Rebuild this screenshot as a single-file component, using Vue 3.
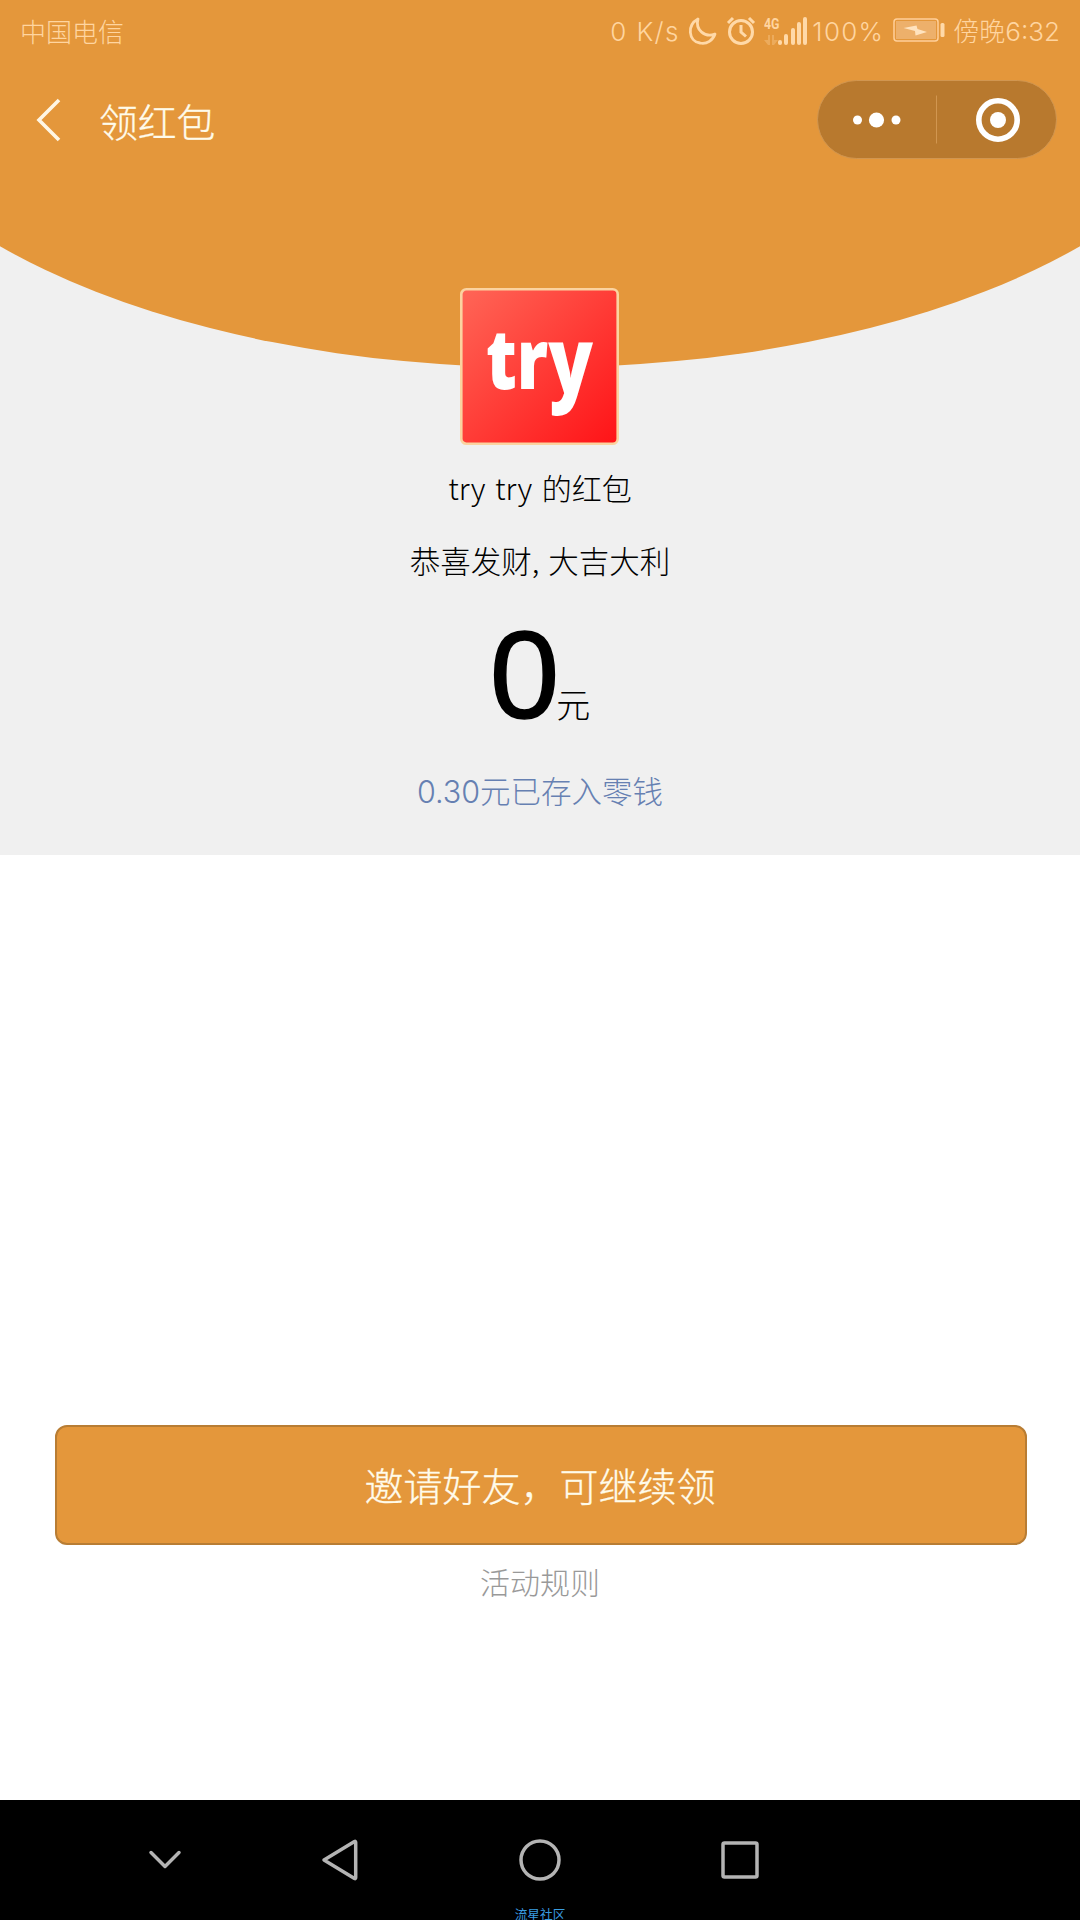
<script setup>
const signalBars = [5, 11, 17, 23, 28]
</script>

<template>
  <div class="phone">
    <section class="hero">
      <svg class="arc" viewBox="0 0 1080 855" aria-hidden="true">
        <ellipse cx="540" cy="34" rx="700" ry="333.500" fill="#e4973b" />
      </svg>

      <header class="status">
        <span class="carrier">中国电信</span>
        <div class="status-right">
          <span class="latin speed">0 K/s</span>
          <svg class="moon" width="30" height="30" viewBox="0 0 30 30" fill="none" stroke="#ffd9a8" stroke-width="2.8" stroke-linejoin="round">
            <path d="M10 3C-1 9 0 25 12 27C19 28.500 25 24 27 18C17 22 7 14 10 3Z" />
          </svg>
          <svg class="alarm" width="30" height="30" viewBox="0 0 30 30" fill="none" stroke="#ffd9a8" stroke-width="3">
            <circle cx="15" cy="16" r="11.500" />
            <path d="M15 9v7l5 4.500M2 7l5-5M28 7l-5-5" />
          </svg>
          <div class="signal">
            <div class="net">
              <b>4G</b>
              <svg width="14" height="10" viewBox="0 0 14 10" fill="#ffd9a8" opacity=".3">
                <path d="M4 0h2v10H4L0 5h4zM8 0h2v5h4l-4 5H8z" />
              </svg>
            </div>
            <i v-for="h in signalBars" :key="h" :style="{ height: h + 'px' }"></i>
          </div>
          <span class="latin percent">100%</span>
          <svg class="battery" width="52" height="26" viewBox="0 0 52 26">
            <rect x="1" y="1" width="44" height="22" rx="3" fill="none" stroke="#ffd09a" stroke-width="1.500" />
            <rect x="3" y="3" width="40" height="18" fill="#edb06b" />
            <path d="M10.500 10L22 13L22.500 17.500L34 14L24.500 11L23.500 7.500Z" fill="#ffe3bf" />
            <rect x="47.500" y="5" width="4" height="14" rx="1.500" fill="#ffd9a8" />
          </svg>
          <span class="time">傍晚<span class="latin">6:32</span></span>
        </div>
      </header>

      <nav class="titlebar">
        <svg class="back" width="26" height="44" viewBox="0 0 26 44" fill="none" stroke="#fff6e4" stroke-width="3.600">
          <path d="M23 2L3 22L23 42" />
        </svg>
        <h1>领红包</h1>
        <div class="capsule">
          <svg width="240" height="79" viewBox="0 0 240 79" fill="#fff">
            <rect x=".5" y=".5" width="239" height="78" rx="39" fill="#b8792e" stroke="#d19650" />
            <circle cx="40.500" cy="40" r="4.500" />
            <circle cx="59.500" cy="40" r="7.600" />
            <circle cx="79" cy="40" r="4.500" />
            <path d="M119.500 15.500v48" stroke="#d19650" />
            <circle cx="181" cy="40" r="19.200" fill="none" stroke="#fff" stroke-width="5.600" />
            <circle cx="181" cy="40" r="8" />
          </svg>
        </div>
      </nav>

      <svg class="logo" width="159" height="157" viewBox="0 0 159 157">
        <defs>
          <linearGradient id="red" x1="0" y1="0" x2="1" y2="1">
            <stop offset="0" stop-color="#ff6657" />
            <stop offset="1" stop-color="#ff1317" />
          </linearGradient>
        </defs>
        <rect x="1.300" y="1.300" width="156.400" height="154.400" rx="5" fill="url(#red)" stroke="#fbd3a0" stroke-width="2.600" />
        <text x="26" y="101" textLength="107" lengthAdjust="spacingAndGlyphs" fill="#fff">tr<tspan class="tail" dy="5">y</tspan></text>
      </svg>

      <p class="sender">try try 的红包</p>
      <p class="wish">恭喜发财, 大吉大利</p>
      <p class="amount"><span class="zero">0</span><span class="unit">元</span></p>
      <p class="saved"><span class="latin">0.30</span>元已存入零钱</p>
    </section>

    <main>
      <button class="invite">邀请好友，可继续领</button>
      <a class="rules">活动规则</a>
    </main>

    <footer class="sysbar">
      <svg width="1080" height="120" viewBox="0 0 1080 120" fill="none" stroke="#b4b4b4" stroke-width="3.500" stroke-linecap="round" stroke-linejoin="round">
        <path d="M151 52.500L165 66.500L179 52.500" />
        <path d="M324 60L354.500 41.500Q355.700 41 355.700 42.500V77.500Q355.700 79 354.500 78.500Z" />
        <circle cx="540" cy="60" r="19" />
        <rect x="723" y="43" width="34" height="34" rx="1.500" />
      </svg>
      <span class="mark">流星社区</span>
    </footer>
  </div>
</template>

<style>
body { margin: 0; }
</style>

<style scoped>
.phone {
  width: 1080px;
  height: 1920px;
  display: flex;
  flex-direction: column;
  overflow: hidden;
  background: #fff;
  font-family: "Noto Sans CJK SC", sans-serif;
  font-weight: 300;
  color: #000;
}
.latin { font-family: Inter, "Liberation Sans", sans-serif; font-weight: 300; }
p, h1 { margin: 0; font-weight: 300; }
svg { display: block; flex: none; }
.hero {
  position: relative;
  isolation: isolate;
  height: 855px;
  background: #f0f0f0;
  display: flex;
  flex-direction: column;
  align-items: center;
  flex: none;
}
.arc { position: absolute; inset: 0; width: 1080px; height: 855px; z-index: -1; }
.status {
  width: 100%;
  height: 62px;
  box-sizing: border-box;
  padding: 0 20px;
  display: flex;
  align-items: center;
  justify-content: space-between;
  color: #ffd5a0;
  font-size: 26px;
  line-height: 62px;
  white-space: nowrap;
}
.status-right { display: flex; align-items: center; }
.speed { letter-spacing: 1.400px; margin-right: 8px; padding-top: 2px; }
.moon { margin-right: 8px; }
.alarm { margin-right: 8px; }
.signal { display: flex; align-items: flex-end; height: 28px; gap: 2.300px; margin-right: 5px; }
.net { width: 14px; height: 28px; display: flex; flex-direction: column; justify-content: space-between; margin-right: -2px; }
.net b { font: 700 15px/14px Roboto, sans-serif; transform: scaleX(.82); transform-origin: left; }
.signal i { width: 4px; border-radius: 2px; background: #ffd9a8; }
.percent { letter-spacing: 1.300px; margin-right: 9px; padding-top: 2px; }
.battery { margin-right: 8px; }
.titlebar {
  width: 100%;
  height: 116px;
  box-sizing: border-box;
  padding: 0 23px 0 36px;
  display: flex;
  align-items: center;
  margin-bottom: 110px;
}
.back { margin-right: 37px; }
.titlebar h1 { font-size: 38.800px; line-height: 60px; color: #fffbea; flex: 1; -webkit-text-stroke: .3px #fffbea; }
.capsule { margin-bottom: 1px; }
.logo { margin-right: 1px; }
.logo text { font: 800 84px "Open Sans", sans-serif; }
.logo .tail { font-size: 92px; }
.sender { font-size: 30px; line-height: 44px; margin-top: 20px; word-spacing: 3px; }
.wish { font-size: 30.500px; line-height: 44px; margin-top: 29px; word-spacing: 2px; }
.amount { display: flex; align-items: baseline; height: 140px; margin-top: 23px; line-height: 140px; }
.zero { font: 400 125px/140px "Liberation Sans", sans-serif; -webkit-text-stroke: 1.500px #000; margin-right: -3px; }
.unit { font-size: 34px; }
.saved { font-size: 30.500px; line-height: 44px; color: #6680b2; margin-top: 23px; }
main { flex: 1; display: flex; flex-direction: column; align-items: center; padding: 570px 0 0 2px; }
.invite {
  width: 972px;
  height: 120px;
  padding: 0 2px 2px 0;
  border: 2px solid #b87d34;
  border-radius: 12px;
  background: #e4973b;
  color: #fffbea;
  font: 300 39px/114px "Noto Sans CJK SC", sans-serif;
  -webkit-text-stroke: .3px #fffbea;
}
.rules { font-size: 30px; line-height: 44px; color: #999; margin: 14px 2px 0 0; }
.sysbar { position: relative; height: 120px; background: #000; flex: none; overflow: hidden; }
.mark {
  position: absolute;
  left: 0;
  right: 0;
  top: 107px;
  text-align: center;
  font-size: 12.700px;
  line-height: 13px;
  font-weight: 400;
  color: #3a9de0;
}
</style>
